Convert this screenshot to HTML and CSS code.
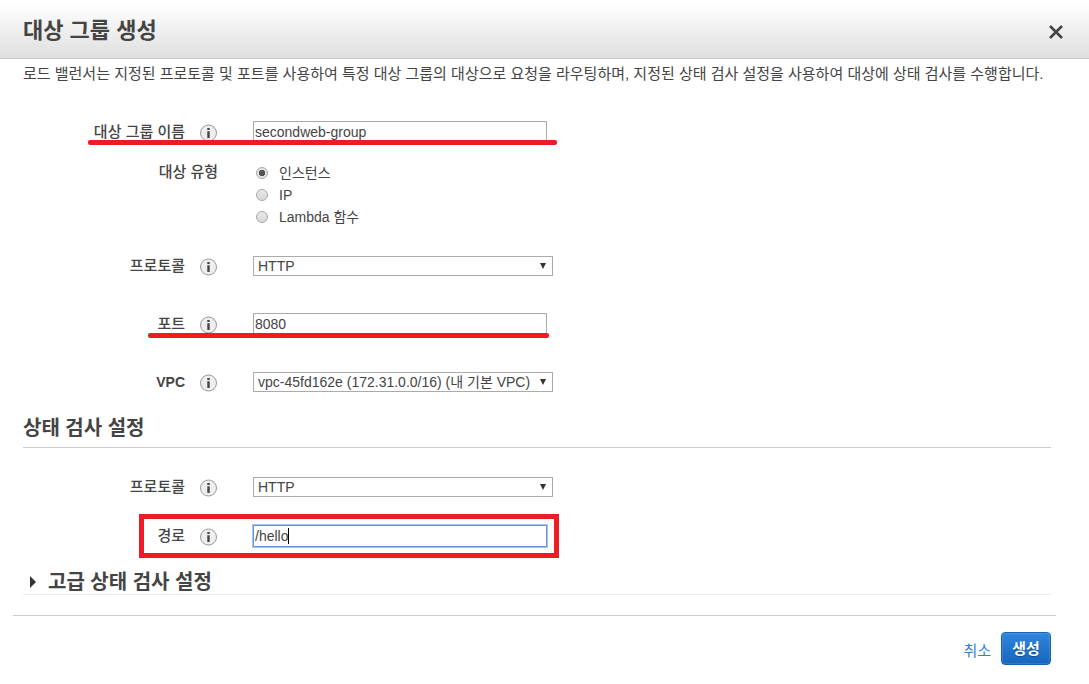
FILE: index.html
```html
<!DOCTYPE html>
<html lang="ko">
<head>
    <meta charset="UTF-8">
    <meta name="viewport" content="width=device-width, initial-scale=1.0">
    <title>대상 그룹 생성</title>
    <link rel="stylesheet" href="styles.css">
</head>
<body>
    <header class="dialog-header">
        <h1>대상 그룹 생성</h1>
        <button type="button" class="close" aria-label="닫기">
            <svg width="14" height="14" viewBox="0 0 14 14"><path d="M1 1L13 13M13 1L1 13" stroke="#444" stroke-width="2.6"/></svg>
        </button>
    </header>
    <form id="targetGroupForm">
        <main class="dialog-body">
            <p class="intro">로드 밸런서는 지정된 프로토콜 및 포트를 사용하여 특정 대상 그룹의 대상으로 요청을 라우팅하며, 지정된 상태 검사 설정을 사용하여 대상에 상태 검사를 수행합니다.</p>

            <div class="form-row name-row">
                <div class="label-cell">
                    <label for="groupName">대상 그룹 이름</label>
                    <svg class="info" viewBox="0 0 18 18"><circle cx="8.5" cy="9" r="8"/><path d="M7.3 4h2.4v2H7.3zM7.3 7.2h2.4V14H7.3z"/></svg>
                </div>
                <input type="text" id="groupName" name="groupName" value="secondweb-group">
            </div>

            <div class="form-row type-row" role="radiogroup" aria-labelledby="typeLabel">
                <div class="label-cell"><span id="typeLabel">대상 유형</span></div>
                <div class="radios">
                    <label><input type="radio" name="targetType" value="instance" checked>인스턴스</label>
                    <label><input type="radio" name="targetType" value="ip">IP</label>
                    <label><input type="radio" name="targetType" value="lambda">Lambda 함수</label>
                </div>
            </div>

            <div class="form-row protocol-row">
                <div class="label-cell">
                    <label for="protocol">프로토콜</label>
                    <svg class="info" viewBox="0 0 18 18"><circle cx="8.5" cy="9" r="8"/><path d="M7.3 4h2.4v2H7.3zM7.3 7.2h2.4V14H7.3z"/></svg>
                </div>
                <div class="select-box">
                    <select id="protocol" name="protocol"><option>HTTP</option></select>
                </div>
            </div>

            <div class="form-row port-row">
                <div class="label-cell">
                    <label for="port">포트</label>
                    <svg class="info" viewBox="0 0 18 18"><circle cx="8.5" cy="9" r="8"/><path d="M7.3 4h2.4v2H7.3zM7.3 7.2h2.4V14H7.3z"/></svg>
                </div>
                <input type="text" id="port" name="port" value="8080">
            </div>

            <div class="form-row vpc-row">
                <div class="label-cell">
                    <label for="vpc">VPC</label>
                    <svg class="info" viewBox="0 0 18 18"><circle cx="8.5" cy="9" r="8"/><path d="M7.3 4h2.4v2H7.3zM7.3 7.2h2.4V14H7.3z"/></svg>
                </div>
                <div class="select-box">
                    <select id="vpc" name="vpc"><option>vpc-45fd162e (172.31.0.0/16) (내 기본 VPC)</option></select>
                </div>
            </div>

            <h2 class="section-title">상태 검사 설정</h2>

            <div class="form-row">
                <div class="label-cell">
                    <label for="checkProtocol">프로토콜</label>
                    <svg class="info" viewBox="0 0 18 18"><circle cx="8.5" cy="9" r="8"/><path d="M7.3 4h2.4v2H7.3zM7.3 7.2h2.4V14H7.3z"/></svg>
                </div>
                <div class="select-box">
                    <select id="checkProtocol" name="checkProtocol"><option>HTTP</option></select>
                </div>
            </div>

            <div class="form-row path-row">
                <div class="label-cell">
                    <label for="path">경로</label>
                    <svg class="info" viewBox="0 0 18 18"><circle cx="8.5" cy="9" r="8"/><path d="M7.3 4h2.4v2H7.3zM7.3 7.2h2.4V14H7.3z"/></svg>
                </div>
                <div class="active-field">
                    <input type="text" id="path" name="path" value="/hello">
                </div>
            </div>

            <h2 class="advanced">
                <button type="button" aria-expanded="false">
                    <svg width="6" height="12" viewBox="0 0 6 12"><path d="M0 0L6 6L0 12z" fill="#333"/></svg>
                    고급 상태 검사 설정
                </button>
            </h2>
        </main>
        <footer class="dialog-footer">
            <a href="#">취소</a>
            <button type="submit" class="primary">생성</button>
        </footer>
    </form>
</body>
</html>
```
FILE: styles.css
```css
*,
*::before,
*::after {
    margin: 0;
    padding: 0;
    box-sizing: border-box;
}

body {
    background: #fff;
    color: #444;
    font-family: "Liberation Sans", "Noto Sans CJK KR", sans-serif;
    font-size: 15px;
    line-height: 20px;
}

input,
select,
button {
    font: inherit;
    color: inherit;
}

/* 헤더 */
.dialog-header {
    display: flex;
    justify-content: space-between;
    align-items: center;
    height: 59px;
    padding: 3px 26px 0 23px;
    background: linear-gradient(to bottom, #fff 4px, #dfdfdf);
    border-bottom: 1px solid #c8c8c8;
}

.dialog-header h1 {
    font-size: 22px;
    line-height: 28px;
}

.close {
    display: flex;
    margin-top: 2px;
    border: 0;
    background: none;
}

.dialog-body {
    padding: 5px 38px 0 23px;
}

.intro {
    margin-bottom: 36px;
    white-space: nowrap;
}

/* 폼 행 */
.form-row {
    position: relative;
    display: grid;
    grid-template-columns: 195px 300px;
    column-gap: 35px;
    align-items: center;
    min-height: 24px;
}

.label-cell {
    display: flex;
    justify-content: flex-end;
    align-items: center;
    gap: 15px;
    font-weight: 500;
}

.vpc-row .label-cell {
    font-size: 14px;
    font-weight: bold;
}

.info {
    width: 18px;
    height: 18px;
    margin-top: 1px;
}

.info circle {
    fill: #eee;
    stroke: #999;
}

.info path {
    fill: #444;
}

input[type="text"] {
    width: 294px;
    height: 22px;
    padding: 0 1px;
    border: 1px solid #aaa;
    background: #fff;
    font-size: 14px;
}

.select-box {
    position: relative;
}

.select-box::after {
    content: "";
    position: absolute;
    top: 7px;
    right: 7px;
    border: 3px solid transparent;
    border-top: 6px solid #333;
    border-bottom: 0;
    pointer-events: none;
}

select {
    display: block;
    appearance: none;
    width: 100%;
    height: 20px;
    padding: 0 4px;
    border: 1px solid #aaa;
    border-radius: 0;
    background: #fff;
    font-size: 14px;
    line-height: 18px;
}

.type-row {
    align-items: start;
    margin: 18px 0 26px;
}

.radios {
    display: flex;
    flex-direction: column;
    font-size: 14px;
}

.radios label {
    display: flex;
    align-items: center;
    gap: 11px;
    height: 22px;
    padding-left: 3px;
}

.radios input {
    appearance: none;
    width: 12px;
    height: 12px;
    border: 1px solid #a8a8a8;
    border-radius: 50%;
    background: linear-gradient(to bottom, #e8e8e8, #d8d8d8);
}

.radios input:checked {
    background: radial-gradient(circle, #555 0 3px, #e4e4e4 3px);
}

.protocol-row,
.port-row {
    margin-bottom: 34px;
}

/* 강조 표시 */
.name-row::after,
.port-row::after {
    content: "";
    position: absolute;
    top: 20px;
    left: 65px;
    width: 469px;
    height: 5px;
    border-radius: 2px;
    background: #ed1c24;
}

.port-row::after {
    top: 21px;
    left: 125px;
    width: 401px;
}

.path-row {
    margin-top: 25px;
}

.path-row::after {
    content: "";
    position: absolute;
    top: -10px;
    left: 116px;
    width: 420px;
    height: 44px;
    border: 5px solid #ed1c24;
    pointer-events: none;
}

.path-row input[type="text"] {
    display: block;
    border-color: #6593d8;
    box-shadow: 0 0 0 1px #a9c6f5;
}

/* 입력 커서 */
.active-field {
    position: relative;
}

.active-field::after {
    content: "";
    position: absolute;
    top: 3px;
    left: 35px;
    width: 1px;
    height: 16px;
    background: #000;
}

.section-title {
    margin: 20px 0 27px;
    padding-bottom: 5px;
    border-bottom: 1px solid #ccc;
    font-size: 20px;
    line-height: 28px;
}

.advanced {
    margin-top: 22px;
    border-bottom: 1px solid #eaeaea;
    font-size: 20px;
    line-height: 24px;
}

.advanced button {
    display: flex;
    align-items: center;
    gap: 12px;
    padding-left: 7px;
    border: 0;
    background: none;
}

/* 하단 버튼 */
.dialog-footer {
    display: flex;
    justify-content: flex-end;
    align-items: center;
    gap: 10px;
    margin: 20px 33px 0 13px;
    padding: 16px 5px 0 0;
    border-top: 1px solid #ccc;
}

.dialog-footer a {
    padding-top: 4px;
    color: #2e7fd6;
    text-decoration: none;
}

.primary {
    width: 50px;
    height: 33px;
    border: 1px solid #1663b5;
    border-radius: 4px;
    background: linear-gradient(to bottom, #2f86dc, #1766bd);
    box-shadow: inset 0 0 0 1px rgba(255, 255, 255, 0.12);
    color: #fff;
    font-weight: bold;
    text-shadow: 0 1px 1px #104a8a;
}
```
